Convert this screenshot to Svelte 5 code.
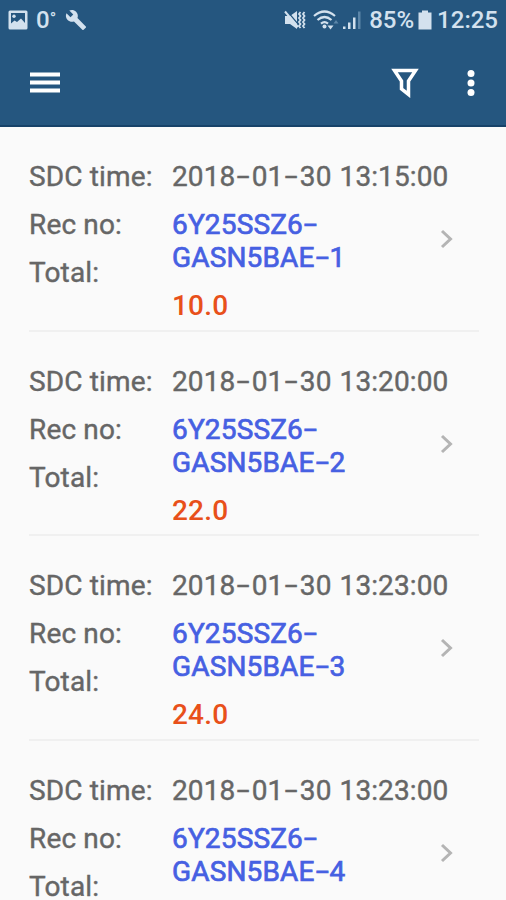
<script lang="ts">
    interface Receipt {
        time: string;
        recNo: [string, string];
        total?: string;
    }

    const receipts: Receipt[] = [
        { time: "2018-01-30 13:15:00", recNo: ["6Y25SSZ6-", "GASN5BAE-1"], total: "10.0" },
        { time: "2018-01-30 13:20:00", recNo: ["6Y25SSZ6-", "GASN5BAE-2"], total: "22.0" },
        { time: "2018-01-30 13:23:00", recNo: ["6Y25SSZ6-", "GASN5BAE-3"], total: "24.0" },
        { time: "2018-01-30 13:23:00", recNo: ["6Y25SSZ6-", "GASN5BAE-4"] },
    ];

    // splits on the dashes so that they can be drawn wider than the font's own
    const parts = (text: string) => text.split(/(-)/).filter((part) => part !== "");
</script>

{#snippet dashed(text: string)}{#each parts(text) as part}{#if part === "-"}<span class="dash">-</span>{:else}{part}{/if}{/each}{/snippet}

<div class="screen">
    <header>
        <div class="status">
            <svg class="picture" width="20" height="20" viewBox="0 0 20 20">
                <rect x="0.500" y="0.500" width="19" height="19" rx="1.500" />
                <path class="cut" d="M3 3h14v10l-4-4.500-4 3.500-2.500-1.500-3.500 3z" />
                <circle cx="6" cy="6.300" r="1.700" />
            </svg>
            <span class="degrees">0<span class="ring">°</span></span>
            <svg class="wrench" width="22" height="22" viewBox="0 0 24 24">
                <path d="M22.700 19l-9.100-9.100c.9-2.300.4-5-1.500-6.900-2-2-5-2.400-7.400-1.300L9 6 6 9 1.600 4.700C.4 7.100.9 10.100 2.900 12.100c1.900 1.900 4.600 2.400 6.900 1.500l9.100 9.100c.4.4 1 .4 1.400 0l2.300-2.300c.5-.4.5-1.100.1-1.400z" />
            </svg>
            <span class="spacer"></span>
            <svg class="mute" width="22" height="20" viewBox="0 0 22 20">
                <path d="M1 6h5l7-5v18l-7-5H1z" />
                <path class="slash" d="M3 1l11 13" />
                <path class="edge" d="M1 1.500l13 15.500" />
                <path class="wave" d="M16.500 2l-1.500 2 1.500 2-1.500 2 1.500 2-1.500 2 1.500 2-1.500 2 1.500 2M20.500 2l-1.500 2 1.500 2-1.500 2 1.500 2-1.500 2 1.500 2-1.500 2 1.500 2" />
            </svg>
            <svg class="wifi" width="26" height="20" viewBox="0 0 26 20">
                <path class="arc" d="M1 6q10.500-9 21 0M4.500 10q7-6 14 0M8 13.700q3.500-3 7 0" />
                <circle cx="11.500" cy="16.500" r="2" />
                <path d="M14.500 15.500h6l-3 4z" />
                <path class="dim" d="M20.500 13.500l2.500-3.500 2.500 3.500z" />
            </svg>
            <svg class="signal" width="20" height="20" viewBox="0 0 20 20">
                <path d="M1 16.500h2.500V19H1zM6 12.500h2.500V19H6zM11 7.500h2.500V19H11z" />
                <path class="dim" d="M16 1.500h2.500V19H16z" />
            </svg>
            <span class="percent">85%</span>
            <svg class="battery" width="14" height="20" viewBox="0 0 14 20">
                <path d="M4 .5h6v2h3.500V19.500H.5V2.500H4z" />
            </svg>
            <span class="clock">12:25</span>
        </div>
        <div class="toolbar">
            <svg width="32" height="24" viewBox="0 0 32 24">
                <path d="M1 1.500h30v4H1zM1 9.500h30v4H1zM1 17.500h30v4H1z" />
            </svg>
            <span class="spacer"></span>
            <svg class="filter" width="28" height="30" viewBox="0 0 28 30">
                <path d="M3.500 2.500h21L17.500 13v13.500l-7-5.500v-8z" />
            </svg>
            <svg class="more" width="10" height="28" viewBox="0 0 10 28">
                <circle cx="5" cy="4.500" r="3.500" />
                <circle cx="5" cy="14" r="3.500" />
                <circle cx="5" cy="23.500" r="3.500" />
            </svg>
        </div>
    </header>

    <main>
        {#each receipts as receipt}
            <div class="receipt">
                <div class="labels">
                    <span>SDC time:</span>
                    <span>Rec no:</span>
                    <span>Total:</span>
                </div>
                <div class="values">
                    <span class="time">{@render dashed(receipt.time)}</span>
                    <span class="rec-no">{@render dashed(receipt.recNo[0])}<br />{@render dashed(receipt.recNo[1])}</span>
                    {#if receipt.total}
                        <span class="total">{receipt.total}</span>
                    {/if}
                </div>
                <svg class="chevron" width="14" height="20" viewBox="0 0 14 20">
                    <path d="M2 2l8.500 8L2 18" />
                </svg>
            </div>
        {/each}
    </main>
</div>

<style>
    :global(body) {
        margin: 0;
        overflow: hidden;
    }
    .screen {
        height: 900px;
        overflow: hidden;
        background: #fafafa;
        font-family: Roboto, sans-serif;
        color: #666;
    }
    header {
        box-sizing: border-box;
        height: 127px;
        background: #25567f;
        border-bottom: 2px solid #174269;
    }
    .status {
        display: flex;
        align-items: center;
        box-sizing: border-box;
        height: 39px;
        padding: 0 8px;
        color: #d3e1ee;
        fill: #d3e1ee;
        font-size: 24px;
        font-weight: 500;
    }
    .status svg,
    .toolbar svg {
        flex: none;
    }
    .spacer {
        flex: 1;
    }
    .cut {
        fill: #25567f;
    }
    .degrees {
        margin-left: 8px;
    }
    .ring {
        font-size: 17px;
        vertical-align: 4px;
    }
    .wrench {
        margin-left: 9px;
    }
    .slash {
        fill: none;
        stroke: #25567f;
        stroke-width: 1.2;
    }
    .edge {
        fill: none;
        stroke: #d3e1ee;
        stroke-width: 2;
    }
    .wave {
        fill: none;
        stroke: #d3e1ee;
        stroke-width: 1.8;
    }
    .wifi {
        margin-left: 7px;
    }
    .arc {
        fill: none;
        stroke: #d3e1ee;
        stroke-width: 2.2;
    }
    .dim {
        fill: #5c86a9;
    }
    .signal {
        margin-left: 3px;
    }
    .percent {
        margin-left: 7px;
    }
    .battery {
        margin-left: 4px;
    }
    .clock {
        margin-left: 5px;
    }
    .toolbar {
        display: flex;
        align-items: center;
        height: 87px;
        padding: 0 30px 0 29px;
        fill: #fff;
    }
    .filter {
        margin-right: 47px;
        fill: none;
        stroke: #fff;
        stroke-width: 3.5;
    }
    main {
        padding: 0 27px 0 29px;
    }
    .receipt {
        display: flex;
        box-sizing: border-box;
        height: 204.7px;
        padding-top: 33px;
        border-bottom: 2px solid #f0f0f0;
        font-size: 28px;
        line-height: 33px;
        white-space: nowrap;
    }
    .labels,
    .values {
        display: flex;
        flex-direction: column;
        gap: 15px;
    }
    .labels {
        width: 143px;
        letter-spacing: 0.15px;
        -webkit-text-stroke: 0.4px #666;
    }
    .values {
        width: 268px;
    }
    .time {
        letter-spacing: 0.1px;
        word-spacing: 1px;
        -webkit-text-stroke: 0.4px #666;
    }
    .dash {
        display: inline-block;
        width: 16.4px;
        text-align: center;
        transform: translateY(-1px) scaleX(1.65);
    }
    .rec-no {
        color: #4660e2;
        letter-spacing: 0.15px;
        -webkit-text-stroke: 0.7px #4660e2;
    }
    .rec-no .dash {
        width: 15px;
    }
    .total {
        color: #e8501a;
        letter-spacing: 0.2px;
        font-weight: 500;
    }
    .chevron {
        margin-top: 69px;
        fill: none;
        stroke: #b4b4b4;
        stroke-width: 3;
    }
</style>
